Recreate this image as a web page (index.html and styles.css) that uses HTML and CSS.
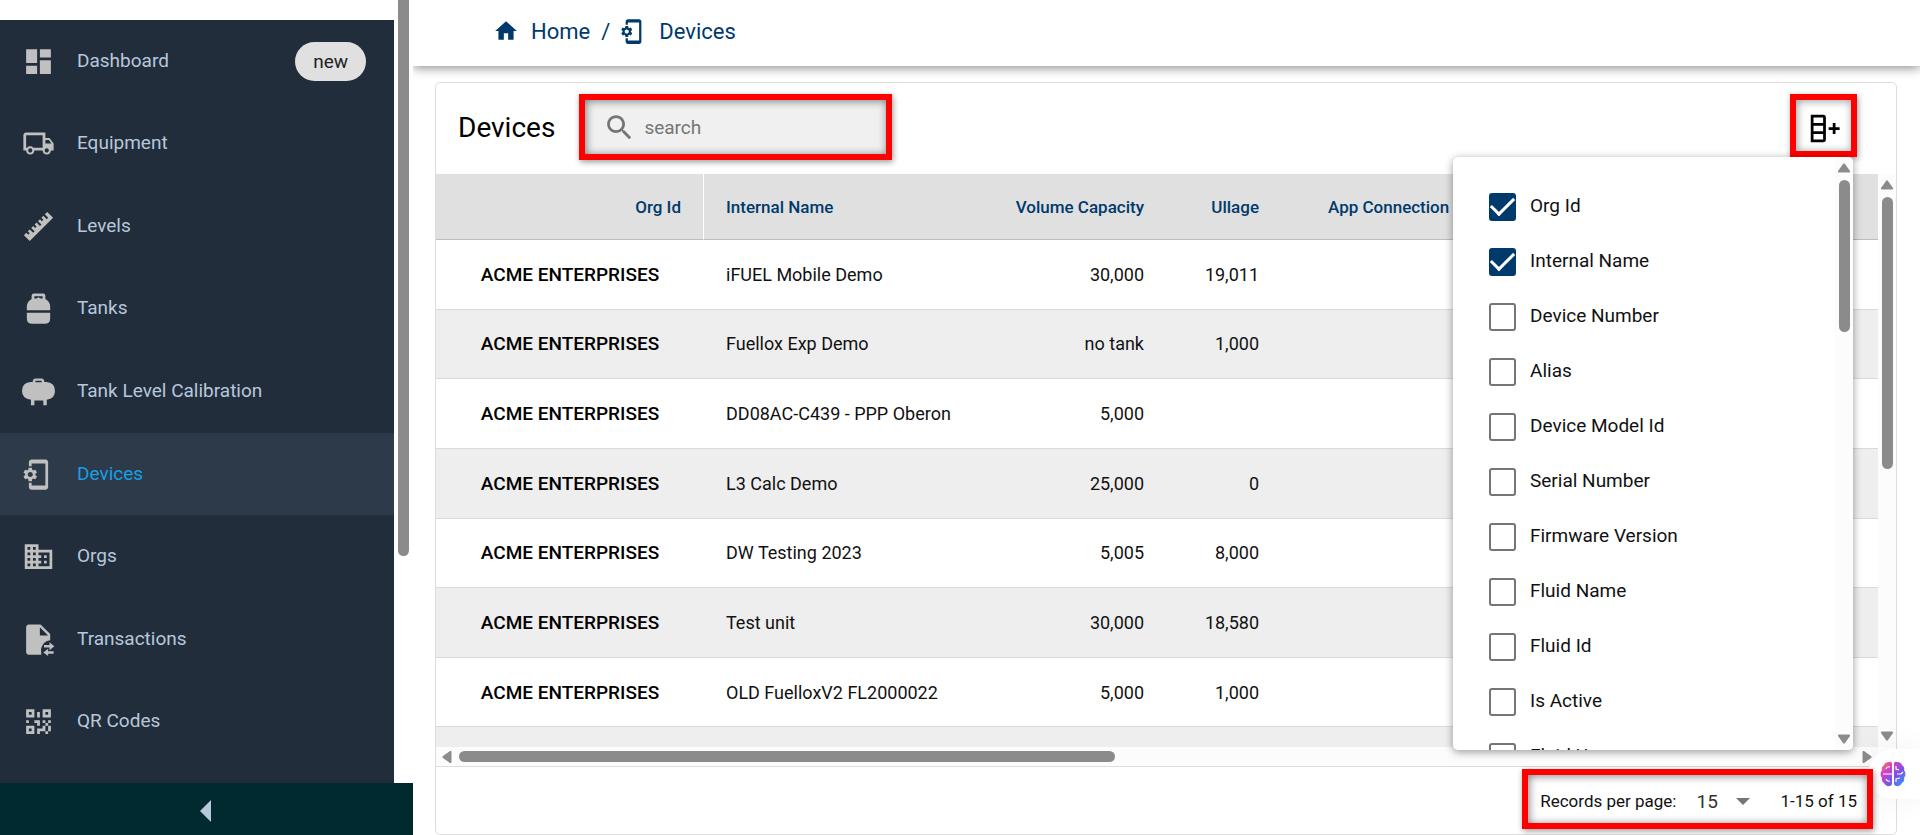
FILE: index.html
```
<!DOCTYPE html>
<html lang="en">
<head>
    <meta charset="UTF-8">
    <meta name="viewport" content="width=device-width, initial-scale=1.0">
    <title>Devices</title>
    <link rel="stylesheet" href="styles.css">
</head>
<body>
    <svg class="sprite" aria-hidden="true">
        <symbol id="icon-device" viewBox="0 0 24 24">
            <path d="M7 1H17C18.1 1 19 1.9 19 3V21C19 22.1 18.1 23 17 23H7C5.9 23 5 22.1 5 21V18H7V20H17V4H7V6H5V3C5 1.9 5.9 1 7 1Z"/>
            <path transform="translate(-0.24 5.76) scale(.52)" d="M19.14 12.94c.04-.3.06-.61.06-.94 0-.32-.02-.64-.07-.94l2.03-1.58c.18-.14.23-.41.12-.61l-1.92-3.32c-.12-.22-.37-.29-.59-.22l-2.39.96c-.5-.38-1.03-.7-1.62-.94l-.36-2.54c-.04-.24-.24-.41-.48-.41h-3.84c-.24 0-.43.17-.47.41l-.36 2.54c-.59.24-1.13.57-1.62.94l-2.39-.96c-.22-.08-.47 0-.59.22L2.74 8.87c-.12.21-.08.47.12.61l2.03 1.58c-.05.3-.09.63-.09.94s.02.64.07.94l-2.03 1.58c-.18.14-.23.41-.12.61l1.92 3.32c.12.22.37.29.59.22l2.39-.96c.5.38 1.03.7 1.62.94l.36 2.54c.05.24.24.41.48.41h3.84c.24 0 .44-.17.47-.41l.36-2.54c.59-.24 1.13-.56 1.62-.94l2.39.96c.22.08.47 0 .59-.22l1.92-3.32c.12-.22.07-.47-.12-.61l-2.01-1.58zM12 15.6c-1.98 0-3.6-1.62-3.6-3.6s1.62-3.6 3.6-3.6 3.6 1.62 3.6 3.6-1.62 3.6-3.6 3.6z"/>
        </symbol>
        <symbol id="arrow-up" viewBox="0 0 12 10"><path d="M5 1Q6 -.4 7 1L12 8Q12.300 9.500 11 9.500H1Q-.3 9.500 0 8Z"/></symbol>
        <symbol id="arrow-left" viewBox="0 0 10 12"><path d="M1 5Q-.4 6 1 7L8 12Q9.500 12.300 9.500 11V1Q9.500 -.3 8 0Z"/></symbol>
    </svg>

    <div class="app">
        <aside class="sidebar">
            <div class="sidebar-scroll">
                <nav class="nav">
                    <a class="nav-item" href="#">
                        <svg class="icon" viewBox="0 0 24 24"><path d="M13,3V9H21V3M13,21H21V11H13M3,21H11V15H3M3,13H11V3H3V13Z"/></svg>
                        <span class="nav-text">Dashboard</span>
                        <span class="chip">new</span>
                    </a>
                    <a class="nav-item" href="#">
                        <svg class="icon" viewBox="0 0 24 24"><path d="M18 18.500C18.830 18.500 19.500 17.830 19.500 17C19.500 16.170 18.830 15.500 18 15.500C17.170 15.500 16.500 16.170 16.500 17C16.500 17.830 17.170 18.500 18 18.500M19.500 9.500H17V12H21.460L19.500 9.500M6 18.500C6.830 18.500 7.500 17.830 7.500 17C7.500 16.170 6.830 15.500 6 15.500C5.170 15.500 4.500 16.170 4.500 17C4.500 17.830 5.170 18.500 6 18.500M20 8L23 12V17H21C21 18.660 19.660 20 18 20C16.340 20 15 18.660 15 17H9C9 18.660 7.660 20 6 20C4.340 20 3 18.660 3 17H1V6C1 4.890 1.890 4 3 4H17V8H20M3 6V15H3.760C4.310 14.390 5.110 14 6 14C6.890 14 7.690 14.390 8.240 15H15V6H3Z"/></svg>
                        <span class="nav-text">Equipment</span>
                    </a>
                    <a class="nav-item" href="#">
                        <svg class="icon" viewBox="0 0 24 24"><path d="M1.390,18.360L3.160,16.600L4.580,18L5.640,16.950L4.220,15.540L5.640,14.120L8.110,16.600L9.170,15.540L6.700,13.060L8.110,11.650L9.530,13.060L10.590,12L9.170,10.590L10.590,9.170L13.060,11.650L14.120,10.590L11.650,8.110L13.060,6.700L14.470,8.110L15.540,7.050L14.120,5.640L15.540,4.220L18,6.700L19.070,5.640L16.600,3.160L18.360,1.390L22.610,5.640L5.640,22.610L1.390,18.360Z"/></svg>
                        <span class="nav-text">Levels</span>
                    </a>
                    <a class="nav-item" href="#">
                        <svg class="icon" viewBox="0 0 24 24"><path fill-rule="evenodd" d="M8.700 1H15.300Q17 1 17 2.800V5Q20.500 6.800 20.500 11V13.200H3.500V11Q3.500 6.800 7 5V2.800Q7 1 8.700 1ZM9 3V4.800H10.500L12 3.800L13.500 4.800H15V3ZM3.500 15H20.500V19Q20.500 23 16.500 23H7.500Q3.500 23 3.500 19Z"/></svg>
                        <span class="nav-text">Tanks</span>
                    </a>
                    <a class="nav-item" href="#">
                        <svg class="icon" viewBox="0 0 24 24"><path fill-rule="evenodd" d="M10 2.500H14Q16 2.500 16.300 5H17.500Q24 5.500 24 11.500T18 18V22H15.500V18.500H9V22H6.500V18Q0 17.500 0 11.500T6.500 5H7.700Q8 2.500 10 2.500ZM9.700 4.200V5.200H14.300V4.200Z"/></svg>
                        <span class="nav-text">Tank Level Calibration</span>
                    </a>
                    <a class="nav-item active" href="#">
                        <svg class="icon"><use href="#icon-device"/></svg>
                        <span class="nav-text">Devices</span>
                    </a>
                    <a class="nav-item" href="#">
                        <svg class="icon" viewBox="0 0 24 24"><path d="M18,15H16V17H18M18,11H16V13H18M20,19H12V17H14V15H12V13H14V11H12V9H20M10,7H8V5H10M10,11H8V9H10M10,15H8V13H10M10,19H8V17H10M6,7H4V5H6M6,11H4V9H6M6,15H4V13H6M6,19H4V17H6M12,7V3H2V21H22V7H12Z"/></svg>
                        <span class="nav-text">Orgs</span>
                    </a>
                    <a class="nav-item" href="#">
                        <svg class="icon" viewBox="0 0 24 24"><path d="M5 1H13.500L20.500 8V12.500A7.500 7.500 0 0 0 14 21.500V23H5C3.900 23 3 22.100 3 21V3C3 1.900 3.900 1 5 1M13 3V9H19L13 3M20 14L23.500 16.900L20 19.800V17.800H16V16H20V14M19 18.800V20.600H23V22.400H19V24L15.500 21.400L19 18.800Z"/></svg>
                        <span class="nav-text">Transactions</span>
                    </a>
                    <a class="nav-item" href="#">
                        <svg class="icon" viewBox="0 0 24 24"><path d="M3,11H5V13H3V11M11,5H13V9H11V5M9,11H13V15H11V13H9V11M15,11H17V13H19V11H21V13H19V15H21V19H19V21H17V19H13V21H11V17H15V15H17V13H15V11M19,19V15H17V19H19M15,3H21V9H15V3M17,5V7H19V5H17M3,3H9V9H3V3M5,5V7H7V5H5M3,15H9V21H3V15M5,17V19H7V17H5Z"/></svg>
                        <span class="nav-text">QR Codes</span>
                    </a>
                </nav>
                <div class="sidebar-bar"><div class="thumb"></div></div>
            </div>
            <button class="collapse" type="button" aria-label="Collapse menu">
                <svg viewBox="0 0 11 22"><path d="M11 0V22L0 11Z"/></svg>
            </button>
        </aside>

        <main class="main">
            <header class="topbar">
                <a class="crumb" href="#">
                    <svg class="icon-home" viewBox="0 0 24 24"><path d="M10,20V14H14V20H19V12H22L12,3L2,12H5V20H10Z"/></svg>
                    <span>Home</span>
                </a>
                <span class="slash">/</span>
                <a class="crumb" href="#">
                    <svg class="icon-crumb"><use href="#icon-device"/></svg>
                    <span>Devices</span>
                </a>
            </header>

            <section class="card">
                <div class="card-head">
                    <h1>Devices</h1>
                    <label class="search">
                        <svg class="icon" viewBox="0 0 24 24"><path d="M15.500 14h-.79l-.28-.27C15.410 12.590 16 11.110 16 9.500 16 5.910 13.090 3 9.500 3S3 5.910 3 9.500 5.910 16 9.500 16c1.610 0 3.090-.59 4.230-1.570l.27.28v.79l5 4.990L20.490 19l-4.990-5zm-6 0C7.010 14 5 11.990 5 9.500S7.010 5 9.500 5 14 7.010 14 9.500 11.990 14 9.500 14z"/></svg>
                        <input type="text" placeholder="search" aria-label="search">
                    </label>
                    <div class="columns">
                        <button class="columns-btn" type="button" aria-label="Select columns">
                            <svg class="icon" viewBox="0 0 24 24"><path d="M11,2A2,2 0 0,1 13,4V20A2,2 0 0,1 11,22H2V2H11M4,10V14H11V10H4M4,16V20H11V16H4M4,4V8H11V4H4M15,11H18V8H20V11H23V13H20V16H18V13H15V11Z"/></svg>
                        </button>
                        <div class="menu">
                            <div class="menu-list">
                                <label><input type="checkbox" checked><span>Org Id</span></label>
                                <label><input type="checkbox" checked><span>Internal Name</span></label>
                                <label><input type="checkbox"><span>Device Number</span></label>
                                <label><input type="checkbox"><span>Alias</span></label>
                                <label><input type="checkbox"><span>Device Model Id</span></label>
                                <label><input type="checkbox"><span>Serial Number</span></label>
                                <label><input type="checkbox"><span>Firmware Version</span></label>
                                <label><input type="checkbox"><span>Fluid Name</span></label>
                                <label><input type="checkbox"><span>Fluid Id</span></label>
                                <label><input type="checkbox"><span>Is Active</span></label>
                                <label><input type="checkbox"><span>Fluid Usage</span></label>
                            </div>
                            <div class="vbar">
                                <svg class="arrow-v"><use href="#arrow-up"/></svg>
                                <div class="track"><div class="thumb menu-thumb"></div></div>
                                <svg class="arrow-v down"><use href="#arrow-up"/></svg>
                            </div>
                        </div>
                    </div>
                </div>

                <div class="table-area">
                    <div class="table-wrap">
                        <table>
                            <colgroup>
                                <col class="col-org"><col class="col-name"><col class="col-volume"><col class="col-ullage"><col>
                            </colgroup>
                            <thead>
                                <tr><th class="org">Org Id</th><th class="name">Internal Name</th><th>Volume Capacity</th><th>Ullage</th><th class="app-type">App Connection Type</th></tr>
                            </thead>
                            <tbody>
                                <tr><td class="org">ACME ENTERPRISES</td><td class="name">iFUEL Mobile Demo</td><td>30,000</td><td>19,011</td><td></td></tr>
                                <tr><td class="org">ACME ENTERPRISES</td><td class="name">Fuellox Exp Demo</td><td>no tank</td><td>1,000</td><td></td></tr>
                                <tr><td class="org">ACME ENTERPRISES</td><td class="name">DD08AC-C439 - PPP Oberon</td><td>5,000</td><td></td><td></td></tr>
                                <tr><td class="org">ACME ENTERPRISES</td><td class="name">L3 Calc Demo</td><td>25,000</td><td>0</td><td></td></tr>
                                <tr><td class="org">ACME ENTERPRISES</td><td class="name">DW Testing 2023</td><td>5,005</td><td>8,000</td><td></td></tr>
                                <tr><td class="org">ACME ENTERPRISES</td><td class="name">Test unit</td><td>30,000</td><td>18,580</td><td></td></tr>
                                <tr><td class="org">ACME ENTERPRISES</td><td class="name">OLD FuelloxV2 FL2000022</td><td>5,000</td><td>1,000</td><td></td></tr>
                                <tr><td></td><td></td><td></td><td></td><td></td></tr>
                            </tbody>
                        </table>
                    </div>
                    <div class="vbar">
                        <svg class="arrow-v"><use href="#arrow-up"/></svg>
                        <div class="track"><div class="thumb table-thumb"></div></div>
                        <svg class="arrow-v down"><use href="#arrow-up"/></svg>
                    </div>
                    <div class="hbar">
                        <svg class="arrow-h"><use href="#arrow-left"/></svg>
                        <div class="track"><div class="thumb wide-thumb"></div></div>
                        <svg class="arrow-h right"><use href="#arrow-left"/></svg>
                    </div>
                </div>

                <footer class="card-foot">
                    <div class="pager">
                        <label for="perPage">Records per page:</label>
                        <div class="select">
                            <select id="perPage">
                                <option>15</option>
                                <option>25</option>
                                <option>50</option>
                            </select>
                            <svg viewBox="0 0 14 7"><path d="M0 0H14L7 7Z"/></svg>
                        </div>
                        <span>1-15 of 15</span>
                    </div>
                </footer>
            </section>
        </main>
    </div>

    <button class="assistant" type="button" aria-label="Assistant">
        <svg viewBox="0 0 26 26">
            <defs>
                <linearGradient id="brain" x1="0" y1="0" x2="1" y2="1">
                    <stop offset="0" stop-color="#ff8a3c"/>
                    <stop offset=".3" stop-color="#d63fc8"/>
                    <stop offset=".6" stop-color="#7b52e8"/>
                    <stop offset="1" stop-color="#2aa4ff"/>
                </linearGradient>
            </defs>
            <path fill="url(#brain)" d="M12 2Q11 0 8.500 1Q5 1 4 4Q1 6 2 9Q-1 13 2 17Q1 20 4 22Q6 26 9 25Q11.500 25.500 12 23ZM14 2Q15 0 17.500 1Q21 1 22 4Q25 6 24 9Q27 13 24 17Q25 20 22 22Q20 26 17 25Q14.500 25.500 14 23Z"/>
            <path fill="none" stroke="#fff" stroke-width="1.200" d="M6 8Q7 5 10 6M3 13H12M6 18Q7 21 10 20M16 5V8L19 9M17 13H21L23 11M16 21V18L20 17"/>
        </svg>
    </button>
</body>
</html>
```
FILE: styles.css
```
* {
    box-sizing: border-box;
}
body {
    margin: 0;
    font-family: Roboto, "Liberation Sans", sans-serif;
    font-size: 19px;
    color: #111;
    background-color: #fff;
}
a {
    color: inherit;
    text-decoration: none;
}
button, input, select {
    font: inherit;
    color: inherit;
}
svg {
    display: block;
    flex: none;
    fill: currentColor;
}
.sprite {
    position: absolute;
    width: 0;
    height: 0;
}
.icon {
    width: 33px;
    height: 33px;
}
.app {
    display: flex;
    height: 100vh;
    overflow: hidden;
}

/* sidebar */
.sidebar {
    display: flex;
    flex-direction: column;
    flex: none;
    width: 413px;
    padding-top: 20px;
}
.sidebar-scroll {
    display: flex;
    flex: 1;
    min-height: 0;
}
.nav {
    display: grid;
    grid-auto-rows: 1fr;
    flex: 1;
    padding-bottom: 20px;
    background-color: #212d3b;
}
.nav-item {
    display: flex;
    align-items: center;
    gap: 22px;
    padding: 0 28px 0 22px;
    color: #b8c7db;
}
.nav-item .icon {
    color: #c0c0c0;
}
.nav-text {
    padding-bottom: 2px;
}
.nav-item.active {
    background-color: #2d3a49;
    color: #189fe4;
}
.chip {
    margin-left: auto;
    padding: 0 18px;
    border-radius: 20px;
    background-color: #e0e0e0;
    color: #222;
    line-height: 39px;
}
.sidebar-bar {
    width: 19px;
    padding-left: 4px;
    margin-top: -20px;
}
.thumb {
    border-radius: 6px;
    background-color: #8b8b8b;
}
.sidebar-bar .thumb {
    width: 11px;
    height: 556px;
    border-radius: 0 0 6px 6px;
}
.collapse {
    display: flex;
    align-items: center;
    justify-content: center;
    height: 52px;
    padding: 4px 2px 0 0;
    border: none;
    background-color: #002a30;
    color: #b8c7db;
}
.collapse svg {
    width: 11px;
    height: 22px;
}

/* top bar */
.main {
    display: flex;
    flex-direction: column;
    flex: 1;
    min-width: 0;
    gap: 16px;
}
.topbar {
    display: flex;
    align-items: center;
    height: 66px;
    padding: 0 80px 4px;
    color: #003a6c;
    font-size: 22px;
    box-shadow: 0 2px 10px rgba(0, 0, 0, 0.45);
    clip-path: inset(0 0 -16px 0);
}
.crumb {
    display: flex;
    align-items: center;
    gap: 12px;
}
.icon-home {
    width: 26px;
    height: 26px;
}
.icon-crumb {
    width: 27px;
    height: 27px;
}
.slash {
    margin: 0 10px 0 11px;
}

/* card */
.card {
    display: flex;
    flex-direction: column;
    flex: 1;
    margin: 0 23px 0 22px;
    border: 1px solid #ddd;
    border-radius: 5px;
    min-height: 0;
}
.card-head {
    display: flex;
    align-items: flex-start;
    height: 91px;
    padding: 11px 39px 0 22px;
}
h1 {
    margin: 0;
    font-size: 28px;
    font-weight: 400;
    line-height: 68px;
    color: #000;
}
.search {
    display: flex;
    align-items: center;
    gap: 8px;
    width: 313px;
    height: 66px;
    margin-left: 24px;
    padding: 0 20px 0 18px;
    border: 6px solid #f00;
    background-color: #f0f0f0;
    color: #757575;
    box-shadow: inset 1px 1px 8px rgba(0, 0, 0, 0.5), 1px 2px 6px rgba(0, 0, 0, 0.4);
}
.search input {
    flex: 1;
    min-width: 0;
    padding: 0;
    border: none;
    outline: none;
    background: none;
}
.search input::placeholder {
    color: #757575;
}
.columns {
    position: relative;
    margin-left: auto;
}
.columns-btn {
    display: flex;
    align-items: center;
    justify-content: center;
    width: 67px;
    height: 63px;
    padding: 6px 0 0 2px;
    border: 6px solid #f00;
    background-color: #fff;
    color: #000;
    box-shadow: inset 1px 1px 8px rgba(0, 0, 0, 0.4), 1px 2px 6px rgba(0, 0, 0, 0.4);
}

/* column menu */
.menu {
    position: absolute;
    top: 63px;
    right: 4px;
    z-index: 2;
    display: flex;
    width: 400px;
    height: 593px;
    border-radius: 5px;
    background-color: #fff;
    box-shadow: 0 2px 8px rgba(0, 0, 0, 0.4);
    overflow: hidden;
}
.menu-list {
    flex: 1;
    padding: 22px 0 0 36px;
    overflow: hidden;
}
.menu label {
    display: flex;
    align-items: center;
    gap: 14px;
    height: 55px;
}
.menu label span {
    padding-bottom: 2px;
}
.menu input {
    appearance: none;
    width: 27px;
    height: 28px;
    margin: 0;
    border: 2px solid #757575;
    border-radius: 3px;
}
.menu input:checked {
    display: flex;
    align-items: center;
    justify-content: center;
    border-color: #003a6c;
    background-color: #003a6c;
}
.menu input:checked::before {
    content: "";
    width: 20px;
    height: 10px;
    margin-bottom: 6px;
    border: solid #fff;
    border-width: 0 0 3px 3px;
    transform: rotate(-45deg);
}

/* scroll bars */
.vbar {
    display: flex;
    flex-direction: column;
    align-items: center;
    width: 18px;
    padding: 6px 0;
    color: #8b8b8b;
    background-color: #fcfcfc;
}
.track {
    flex: 1;
}
.vbar .track {
    padding: 7px 0;
}
.arrow-v {
    width: 12px;
    height: 10px;
}
.down {
    transform: rotate(180deg);
}
.vbar .thumb {
    width: 11px;
}
.menu-thumb {
    height: 152px;
}
.table-thumb {
    height: 272px;
}
.hbar {
    display: flex;
    align-items: center;
    height: 19px;
    padding: 0 6px;
    color: #8b8b8b;
    background-color: #fcfcfc;
}
.hbar .track {
    padding: 0 7px;
}
.arrow-h {
    width: 10px;
    height: 12px;
}
.right {
    transform: rotate(180deg);
}
.wide-thumb {
    width: 47%;
    height: 11px;
}

/* table */
.table-area {
    display: grid;
    grid-template-columns: 1fr 18px;
    grid-template-rows: 1fr 19px;
    flex: 1;
    min-height: 0;
}
.table-wrap {
    overflow: hidden;
    min-height: 0;
}
table {
    width: 100%;
    height: 623px;
    table-layout: fixed;
    border-collapse: separate;
    border-spacing: 0;
}
.col-org {
    width: 268px;
}
.col-name {
    width: 285px;
}
.col-volume {
    width: 177px;
}
.col-ullage {
    width: 115px;
}
th {
    height: 66px;
    padding: 0 22px;
    border-bottom: 1px solid #bdbdbd;
    background-color: #e0e0e0;
    color: #003a6c;
    font-size: 17px;
    font-weight: 500;
    text-align: right;
    white-space: nowrap;
}
td {
    height: 69px;
    padding: 0 22px;
    border-bottom: 1px solid #dadada;
    font-size: 18px;
    text-align: right;
}
th.org {
    border-right: 1px solid #fff;
}
td.org {
    font-size: 19px;
    font-weight: 500;
    text-align: center;
    color: #000;
}
th.name, td.name {
    text-align: left;
}
th.app-type {
    padding-left: 47px;
    text-align: left;
}
tbody tr:nth-child(even) {
    background-color: #eee;
}

/* footer */
.card-foot {
    display: flex;
    justify-content: flex-end;
    align-items: flex-start;
    height: 68px;
    padding: 2px 23px 0 0;
    border-top: 1px solid #ddd;
}
.pager {
    position: relative;
    z-index: 3;
    display: flex;
    align-items: center;
    height: 60px;
    padding: 4px 10px 0 12px;
    border: 6px solid #f00;
    font-size: 17px;
    box-shadow: inset 1px 1px 8px rgba(0, 0, 0, 0.5), 1px 2px 6px rgba(0, 0, 0, 0.4);
}
.select {
    display: flex;
    align-items: center;
    margin: 0 30px 0 20px;
    color: #757575;
}
.select select {
    appearance: none;
    width: 40px;
    padding: 0;
    border: none;
    background: none;
    color: #333;
    font-size: 19px;
}
.select svg {
    width: 14px;
    height: 7px;
}
.assistant {
    position: absolute;
    top: 749px;
    right: 0;
    z-index: 2;
    width: 52px;
    height: 50px;
    padding: 0 0 0 12px;
    border: none;
    border-radius: 25px 0 0 25px;
    background-color: #fff;
    box-shadow: 0 0 30px rgba(0, 0, 0, 0.06);
}
.assistant svg {
    width: 26px;
    height: 26px;
}
```
